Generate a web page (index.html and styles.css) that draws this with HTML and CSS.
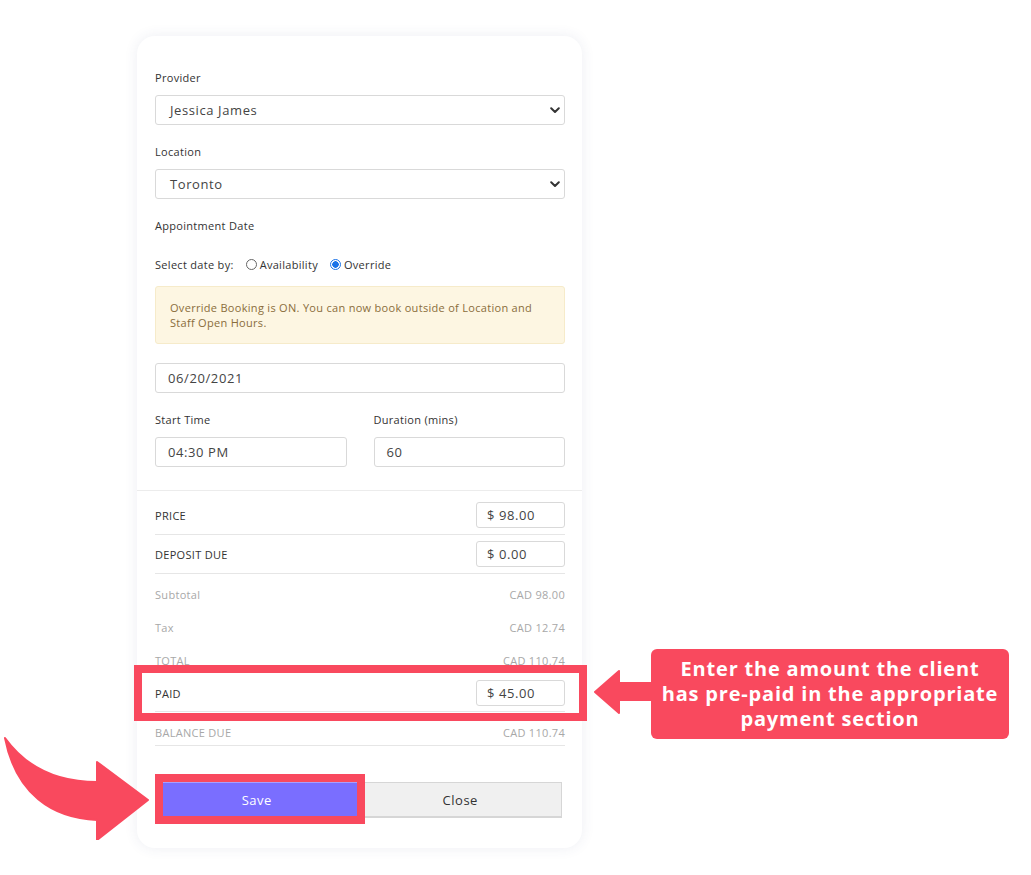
FILE: index.html
```html
<!DOCTYPE html>
<html>
<head>
<meta charset="utf-8">
<link rel="stylesheet" href="styles.css">
</head>
<body>
<div class="page">
  <div class="card">
    <div class="field">
      <div class="label">Provider</div>
      <div class="select"><span>Jessica James</span><svg class="chev" width="10" height="7" viewBox="0 0 10 7"><path d="M1.2 1.3 L5 5 L8.8 1.3" fill="none" stroke="#333" stroke-width="2" stroke-linecap="round" stroke-linejoin="round"/></svg></div>
    </div>
    <div class="field">
      <div class="label">Location</div>
      <div class="select"><span>Toronto</span><svg class="chev" width="10" height="7" viewBox="0 0 10 7"><path d="M1.2 1.3 L5 5 L8.8 1.3" fill="none" stroke="#333" stroke-width="2" stroke-linecap="round" stroke-linejoin="round"/></svg></div>
    </div>
    <div class="label date-label">Appointment Date</div>
    <div class="radio-line">
      <span class="radio-title">Select date by:</span>
      <label class="radio"><span class="dot"></span>Availability</label>
      <label class="radio"><span class="dot on"></span>Override</label>
    </div>
    <div class="alert">Override Booking is ON. You can now book outside of Location and Staff Open Hours.</div>
    <div class="input wide">06/20/2021</div>
    <div class="two-col">
      <div>
        <div class="label">Start Time</div>
        <div class="input">04:30 PM</div>
      </div>
      <div>
        <div class="label">Duration (mins)</div>
        <div class="input">60</div>
      </div>
    </div>
    <div class="summary">
      <div class="row line first"><span class="row-label">PRICE</span><span class="money">$ 98.00</span></div>
      <div class="row line"><span class="row-label">DEPOSIT DUE</span><span class="money">$ 0.00</span></div>
      <div class="row muted"><span>Subtotal</span><span>CAD 98.00</span></div>
      <div class="row muted"><span>Tax</span><span>CAD 12.74</span></div>
      <div class="row muted"><span>TOTAL</span><span>CAD 110.74</span></div>
      <div class="row line paid"><span class="row-label">PAID</span><span class="money">$ 45.00</span></div>
      <div class="row muted balance"><span>BALANCE DUE</span><span>CAD 110.74</span></div>
    </div>
    <div class="buttons">
      <button class="btn save">Save</button>
      <button class="btn close">Close</button>
    </div>
  </div>

  <svg class="curve-arrow" width="160" height="120" viewBox="0 0 160 120">
    <path d="M5 18 C28 50 60 62 97 62 L97 42 L148 80 L97 120 L97 100 C52 98 16 74 5 18 Z" fill="#f9495e" stroke="#f9495e" stroke-width="2" stroke-linejoin="round"/>
  </svg>

  <svg class="left-arrow" width="60" height="46" viewBox="0 0 60 46">
    <path d="M2 23 L26 2 L26 14 L60 14 L60 31 L26 31 L26 44 Z" fill="#f9495e" stroke="#f9495e" stroke-width="2" stroke-linejoin="round"/>
  </svg>
  <div class="callout">Enter the amount the client<br>has pre-paid in the appropriate<br>payment section</div>
</div>
</body>
</html>
```

FILE: styles.css
```css
* { box-sizing: border-box; }
html, body { margin: 0; padding: 0; background: #fff; }
body { font-family: "Open Sans", "Liberation Sans", sans-serif; color: #333; letter-spacing: 0.3px; }

.page {
  position: relative;
  width: 1031px;
  height: 875px;
  padding: 36px 0 0 137px;
  overflow: hidden;
}

.card {
  width: 445px;
  background: #fff;
  border-radius: 18px;
  box-shadow: 0 0 14px rgba(60, 70, 120, 0.09);
  padding: 35px 17px 30px 18px;
}

.label {
  font-size: 11px;
  line-height: 14px;
  color: #333;
  margin-bottom: 10px;
}
.field { margin-bottom: 20px; }

.select {
  height: 30px;
  border: 1px solid #d9d9d9;
  border-radius: 3px;
  display: flex;
  align-items: center;
  justify-content: space-between;
  padding: 0 4px 0 14px;
  font-size: 13px;
  letter-spacing: 0.6px;
  color: #444;
}
.chev { display: block; }

.date-label { margin-bottom: 24px; }

.radio-line {
  display: flex;
  align-items: center;
  height: 14px;
  font-size: 11px;
  color: #333;
}
.radio-title { margin-right: 12px; }
.radio { display: flex; align-items: center; margin-right: 12px; }
.dot {
  width: 11px; height: 11px;
  border-radius: 50%;
  border: 1px solid #666;
  margin-right: 3px;
  background: #fff;
}
.dot.on {
  border: 1px solid #1a73e8;
  background: radial-gradient(circle, #1a73e8 0 3px, #fff 3.5px);
}

.alert {
  margin-top: 15px;
  background: #fdf6e2;
  border: 1px solid #f6ebca;
  border-radius: 3px;
  padding: 13px 14px;
  font-size: 11px;
  line-height: 15px;
  color: #8a6d3b;
}

.input {
  height: 30px;
  border: 1px solid #d9d9d9;
  border-radius: 3px;
  display: flex;
  align-items: center;
  padding: 0 12px;
  font-size: 13px;
  letter-spacing: 0.6px;
  color: #444;
}
.input.wide { margin-top: 19px; }

.two-col {
  margin-top: 20px;
  display: grid;
  grid-template-columns: 1fr 1fr;
  column-gap: 27px;
}

.summary {
  margin: 23px -17px 0 -18px;
  padding: 5px 17px 0 18px;
  border-top: 1px solid #ececec;
}

.row {
  display: flex;
  justify-content: space-between;
  align-items: center;
  font-size: 11px;
}
.row.line {
  padding: 6px 0;
  border-bottom: 1px solid #e6e6e6;
}
.row-label { color: #333; }
.money {
  width: 89px;
  height: 26px;
  border: 1px solid #d9d9d9;
  border-radius: 3px;
  display: flex;
  align-items: center;
  padding: 0 10px;
  font-size: 13px;
  letter-spacing: 0.6px;
  color: #444;
}
.row.muted {
  color: #a8a8a8;
  line-height: 13px;
  padding: 14px 0 6px;
}
.row.paid {
  position: relative;
  padding: 7px 0 5px;
}
.row.paid::after {
  content: "";
  position: absolute;
  left: -21px;
  right: -22px;
  top: -8px;
  bottom: -10px;
  border: 8px solid #f9495e;
}
.row.balance { border-bottom: 1px solid #e6e6e6; }

.buttons {
  margin-top: 36px;
  width: 407px;
  display: flex;
}
.btn {
  flex: 1;
  height: 36px;
  font-family: inherit;
  font-size: 13px;
  letter-spacing: 0.5px;
  border-radius: 0;
  cursor: pointer;
}
.btn.save {
  position: relative;
  background: #7a6eff;
  color: #fff;
  border: 1px solid #7a6eff;
  border-top-color: #a89fff;
}
.btn.save::after {
  content: "";
  position: absolute;
  left: -1px;
  right: -7px;
  top: -9px;
  bottom: -7px;
  border: 8px solid #f9495e;
}
.btn.close {
  background: #f0f0f0;
  color: #333;
  border: 1px solid #d6d6d6;
  border-bottom-width: 2px;
}

.curve-arrow {
  position: absolute;
  left: 0;
  top: 720px;
}
.left-arrow {
  position: absolute;
  left: 593px;
  top: 669px;
}
.callout {
  position: absolute;
  left: 651px;
  top: 649px;
  width: 358px;
  height: 90px;
  background: #f9495e;
  border-radius: 6px;
  color: #fff;
  font-weight: 700;
  font-size: 20px;
  letter-spacing: 0.8px;
  line-height: 25px;
  text-align: center;
  padding-top: 7px;
}
```
